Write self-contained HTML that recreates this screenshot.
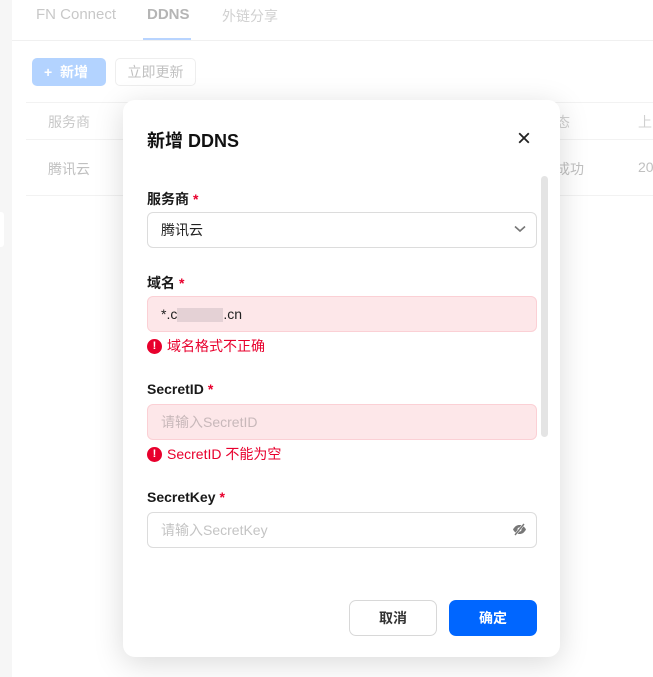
<!DOCTYPE html>
<html><head><meta charset="utf-8"><style>
*{box-sizing:border-box;margin:0;padding:0}
body{width:653px;height:677px;overflow:hidden;background:#fff;font-family:"Liberation Sans","Noto Sans CJK SC",sans-serif;font-size:14px;position:relative;color:#222}
.a{position:absolute}
.strip{left:0;top:0;width:12px;height:677px;background:#f6f6f6}
.lbl{position:absolute;left:147px;font-weight:bold;font-size:14px;color:#1a1a1a}
.lbl i{color:#e8002d;font-style:normal;margin-left:4px}
.inp{position:absolute;left:147px;width:390px;height:36px;border:1px solid #dcdcdc;border-radius:6px;padding-left:13px;line-height:34px;font-size:14px}
.err{background:#fde7e9;border-color:#fbd0d5}
.emsg{position:absolute;left:147px;color:#e8002d;font-size:14px;line-height:16px;display:flex;align-items:center}
.emsg b{display:inline-block;width:15px;height:15px;border-radius:50%;background:#e8002d;color:#fff;font-size:11px;text-align:center;line-height:15px;margin-right:5px}
</style></head><body>
<div class="a strip"></div>
<div class="a" style="left:0;top:212px;width:4px;height:35px;background:#fff;border-radius:0 3px 3px 0"></div>
<div class="a" style="left:36px;top:6px;color:#c8c8c8;font-size:15px">FN Connect</div>
<div class="a" style="left:147px;top:6px;color:#b5b5b5;font-size:15px;font-weight:bold">DDNS</div>
<div class="a" style="left:222px;top:6px;color:#d0d0d0;font-size:14px">外链分享</div>
<div class="a" style="left:143px;top:38px;width:48px;height:2px;background:#b8d4ff"></div>
<div class="a" style="left:12px;top:40px;width:641px;height:1px;background:#f0f0f0"></div>
<div class="a" style="left:32px;top:58px;width:74px;height:28px;background:#b3d3ff;border-radius:5px;color:#fff;font-weight:bold;font-size:14px;line-height:28px;padding-left:12px">+&nbsp; 新增</div>
<div class="a" style="left:115px;top:58px;width:81px;height:28px;border:1px solid #eee;border-radius:5px;color:#c0c0c0;font-size:14px;line-height:26px;text-align:center">立即更新</div>
<div class="a" style="left:26px;top:102px;width:627px;height:1px;background:#f2f2f2"></div>
<div class="a" style="left:26px;top:139px;width:627px;height:1px;background:#f2f2f2"></div>
<div class="a" style="left:26px;top:195px;width:627px;height:1px;background:#f2f2f2"></div>
<div class="a" style="left:48px;top:112px;color:#c8c8c8">服务商</div>
<div class="a" style="left:48px;top:159px;color:#c0c0c0">腾讯云</div>
<div class="a" style="left:556px;top:112px;color:#d0d0d0">态</div>
<div class="a" style="left:638px;top:112px;color:#d0d0d0">上</div>
<div class="a" style="left:556px;top:159px;color:#c0c0c0">成功</div>
<div class="a" style="left:638px;top:159px;color:#c0c0c0">20</div>

<div class="a" style="left:123px;top:100px;width:437px;height:557px;background:#fff;border-radius:12px;box-shadow:0 6px 30px rgba(0,0,0,.15)"></div>
<div class="a" style="left:147px;top:127px;font-size:18px;font-weight:bold;color:#111">新增 DDNS</div>
<svg class="a" style="left:518px;top:132px" width="12" height="12" viewBox="0 0 12 12"><path d="M1.2 1.2L10.8 10.8M10.8 1.2L1.2 10.8" stroke="#222" stroke-width="1.8"/></svg>
<div class="a" style="left:541px;top:176px;width:7px;height:261px;background:#e4e4e4;border-radius:4px"></div>

<div class="lbl" style="top:189px">服务商<i>*</i></div>
<div class="inp" style="top:212px">腾讯云</div>
<svg class="a" style="left:514px;top:225px" width="12" height="8" viewBox="0 0 12 8"><path d="M1 1.5L6 6L11 1.5" stroke="#777" stroke-width="1.6" fill="none"/></svg>

<div class="lbl" style="top:273px">域名<i>*</i></div>
<div class="inp err" style="top:296px">*.c<span style="display:inline-block;width:46px;height:14px;background:#d8c8cc;vertical-align:middle;opacity:.7"></span>.cn</div>
<div class="emsg" style="top:338px"><b>!</b>域名格式不正确</div>

<div class="lbl" style="top:381px">SecretID<i>*</i></div>
<div class="inp err" style="top:404px;color:#c8b8ba">请输入SecretID</div>
<div class="emsg" style="top:446px"><b>!</b>SecretID 不能为空</div>

<div class="lbl" style="top:489px">SecretKey<i>*</i></div>
<div class="inp" style="top:512px;color:#c4c4c4">请输入SecretKey</div>
<svg class="a" style="left:512px;top:523px" width="15" height="13" viewBox="0 0 15 13"><path d="M1 6.5C3 3 5 2 7.5 2S12 3 14 6.5C12 10 10 11 7.5 11S3 10 1 6.5Z" fill="#777"/><circle cx="7.5" cy="6.5" r="2" fill="#fff"/><path d="M3 12L12 1" stroke="#fff" stroke-width="2.5"/><path d="M3 12L12 1" stroke="#777" stroke-width="1.4"/></svg>

<div class="a" style="left:349px;top:600px;width:88px;height:36px;border:1px solid #d8d8d8;border-radius:7px;text-align:center;line-height:34px;font-weight:bold;color:#333">取消</div>
<div class="a" style="left:449px;top:600px;width:88px;height:36px;background:#0066ff;border-radius:7px;text-align:center;line-height:36px;font-weight:bold;color:#fff">确定</div>
</body></html>
